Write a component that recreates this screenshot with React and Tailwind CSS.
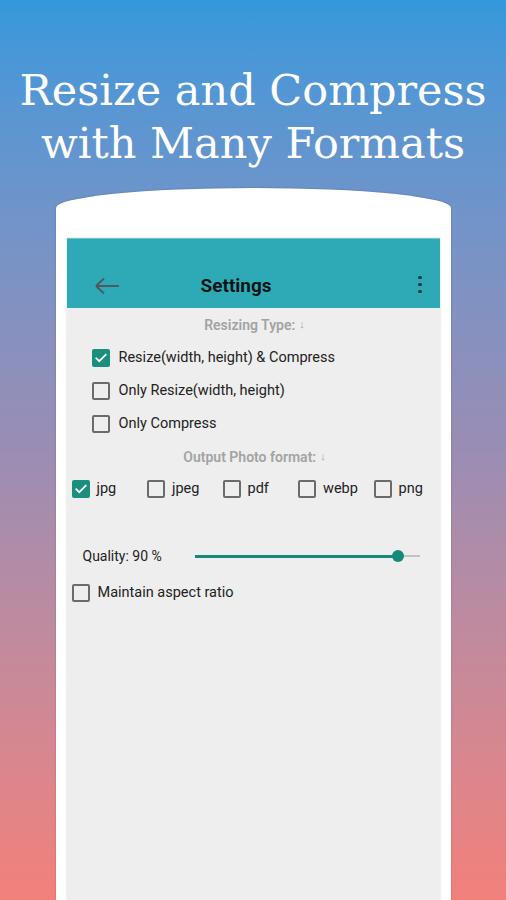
import React from "react";

function Box({ checked }) {
  if (checked) {
    return (
      <div className="w-[18px] h-[18px] rounded-[2px] bg-[#1b8f7e] flex items-center justify-center shrink-0">
        <svg width="14" height="14" viewBox="0 0 24 24" fill="none">
          <path d="M4 12.5l5 5L20 6.5" stroke="#ffffff" strokeWidth="3" strokeLinecap="square" />
        </svg>
      </div>
    );
  }
  return <div className="w-[18px] h-[18px] rounded-[2px] border-2 border-[#6b6b6b] shrink-0" />;
}

function Row({ checked, label }) {
  return (
    <div className="h-[33px] flex items-center pl-[25px]">
      <Box checked={checked} />
      <span className="ml-[9px] text-[14.5px] text-[#222]">{label}</span>
    </div>
  );
}

function Fmt({ checked, label }) {
  return (
    <div className="w-[75.5px] flex items-center shrink-0">
      <Box checked={checked} />
      <span className="ml-[7px] text-[14.5px] text-[#222]">{label}</span>
    </div>
  );
}

export default function App() {
  return (
    <div
      className="w-[506px] h-[900px] overflow-hidden bg-gradient-to-b from-[#3498dc] via-[#9a8db4] to-[#f3807a] flex flex-col items-center"
      style={{ fontFamily: "Roboto, 'Noto Sans', sans-serif" }}
    >
      <div
        className="pt-[64px] text-white text-center text-[43px] leading-[53px] whitespace-nowrap"
        style={{ fontFamily: "'DejaVu Serif', 'Liberation Serif', serif" }}
      >
        <div>Resize and Compress</div>
        <div>with Many Formats</div>
      </div>

      <div className="mt-[18px] w-[395px] flex-1 bg-white rounded-t-[197px_20px] shadow-[0_0_2px_rgba(0,0,0,0.25)] px-[11px] pt-[50px] flex flex-col">
        <div className="flex-1 bg-[#eeeeee] shadow-[0_0_2px_rgba(0,0,0,0.2)] flex flex-col">
          <div className="h-[70px] bg-[#2eaab7] border-t border-[#6fc6cf] flex flex-col justify-end">
            <div className="h-[44px] flex items-center relative">
              <svg className="ml-[27px]" width="26" height="20" viewBox="0 0 26 20" fill="none">
                <path d="M2 10H25M2 10L10 2.5M2 10L10 17.5" stroke="#505a5e" strokeWidth="2" />
              </svg>
              <div className="absolute left-[134px] text-[19px] font-bold text-[#0d1416]">Settings</div>
              <div className="ml-auto mr-[18px] flex flex-col gap-[3.5px] -mt-[3px]">
                <div className="w-[3.5px] h-[3.5px] rounded-full bg-[#1f3b40]" />
                <div className="w-[3.5px] h-[3.5px] rounded-full bg-[#1f3b40]" />
                <div className="w-[3.5px] h-[3.5px] rounded-full bg-[#1f3b40]" />
              </div>
            </div>
          </div>

          <div className="mt-[7px] h-[20px] flex items-center justify-center pl-[3px] text-[14px] font-semibold text-[#a3a3a3]">
            Resizing Type: <span className="ml-[4px] text-[11px]">↓</span>
          </div>

          <div className="mt-[6px] flex flex-col">
            <Row checked label="Resize(width, height) & Compress" />
            <Row label="Only Resize(width, height)" />
            <Row label="Only Compress" />
          </div>

          <div className="mt-[7px] h-[20px] flex items-center justify-center pl-[3px] text-[14px] font-semibold text-[#a3a3a3]">
            Output Photo format: <span className="ml-[4px] text-[11px]">↓</span>
          </div>

          <div className="mt-[7px] h-[30px] flex items-center pl-[5px]">
            <Fmt checked label="jpg" />
            <Fmt label="jpeg" />
            <Fmt label="pdf" />
            <Fmt label="webp" />
            <Fmt label="png" />
          </div>

          <div className="mt-[37px] h-[30px] flex items-center pl-[16px]">
            <span className="text-[14px] text-[#222] w-[112px]">Quality: 90 %</span>
            <div className="relative w-[225px] h-[12px] flex items-center">
              <div className="h-[1.5px] w-full bg-[#c2c2c2]" />
              <div className="absolute left-0 h-[3px] w-[203px] bg-[#168a78]" />
              <div className="absolute left-[197px] w-[12px] h-[12px] rounded-full bg-[#168a78]" />
            </div>
          </div>

          <div className="mt-[7px] h-[30px] flex items-center pl-[5px]">
            <Box />
            <span className="ml-[8px] text-[14.5px] text-[#222]">Maintain aspect ratio</span>
          </div>
        </div>
      </div>
    </div>
  );
}
